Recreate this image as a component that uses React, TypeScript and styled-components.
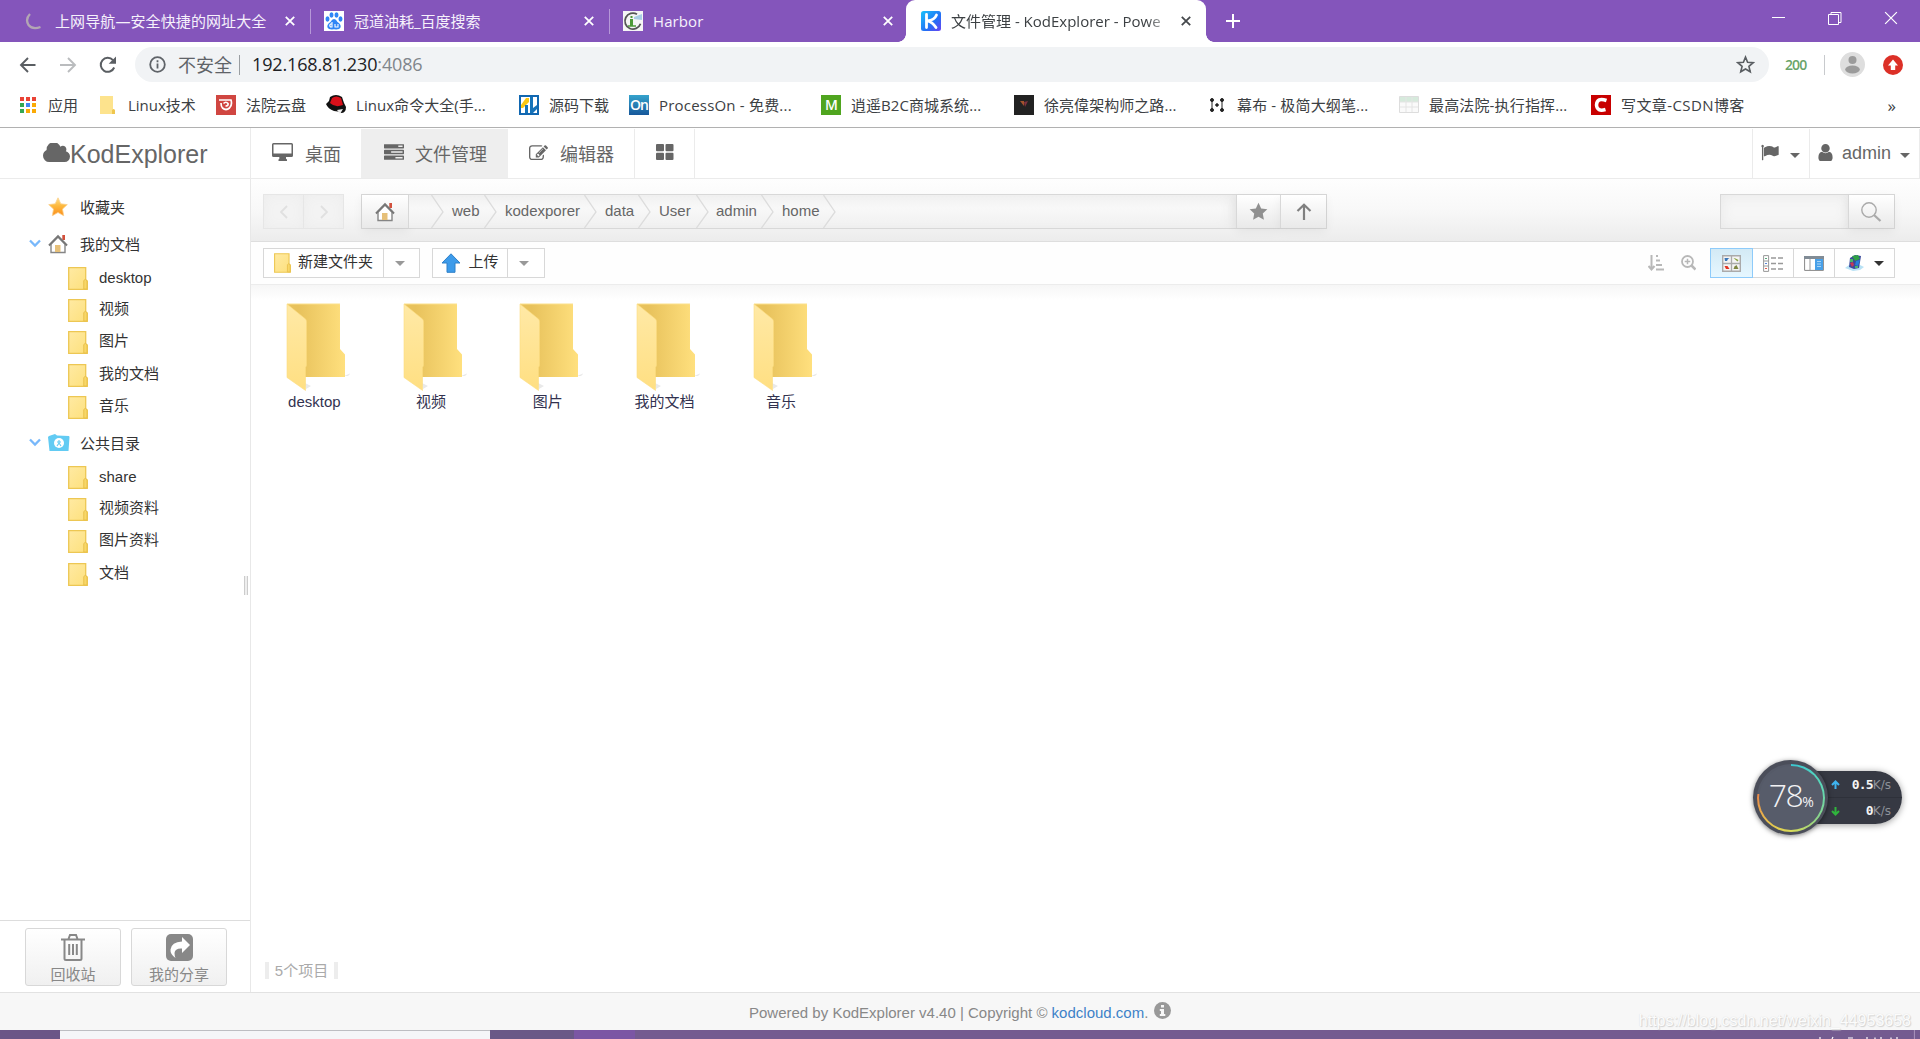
import React from "react";
import styled, { createGlobalStyle } from "styled-components";

const Global = createGlobalStyle`
  * { box-sizing: border-box; }
  html, body { margin: 0; padding: 0; overflow: hidden; background: #fff; }
  svg { display: block; flex: none; }
`;

const uiFont = `"Open Sans", "Noto Sans CJK SC", sans-serif`;
const appFont = `"Liberation Sans", "Noto Sans CJK SC", sans-serif`;

const Screen = styled.div`
  position: relative;
  width: 1920px;
  height: 1039px;
  overflow: hidden;
  display: flex;
  flex-direction: column;
  background: #fff;
  font-family: ${appFont};
  white-space: nowrap;
`;

/* ---------- browser chrome ---------- */
const TabStrip = styled.div`
  height: 42px;
  flex: none;
  display: flex;
  background: #8455bb;
  color: #f3eef8;
  font-family: ${uiFont};
`;
const Tab = styled.div<{ $w: number; $pad: number; $active?: boolean; $line?: boolean }>`
  position: relative;
  width: ${p => p.$w}px;
  padding-left: ${p => p.$pad}px;
  display: flex;
  align-items: center;
  background: ${p => (p.$active ? "#fff" : "transparent")};
  color: ${p => (p.$active ? "#3c4043" : "#f6f1fb")};
  border-radius: ${p => (p.$active ? "9px 9px 0 0" : "0")};
  &::after {
    content: "";
    display: ${p => (p.$line ? "block" : "none")};
    position: absolute;
    right: 0;
    top: 9px;
    width: 1px;
    height: 25px;
    background: #b698d8;
  }
`;
const TabFoot = styled.i<{ $side: "left" | "right" }>`
  position: absolute;
  bottom: 0;
  ${p => p.$side}: -8px;
  width: 8px;
  height: 8px;
  background: radial-gradient(circle at ${p => (p.$side === "left" ? "0 0" : "8px 0")}, transparent 7.5px, #fff 8px);
`;
const TabTitle = styled.span<{ $w: number; $ls?: number; $fade?: boolean }>`
  width: ${p => p.$w}px;
  margin-left: 10px;
  font-size: 15px;
  line-height: 24px;
  letter-spacing: ${p => p.$ls || 0}px;
  ${p => p.$fade && "mask-image: linear-gradient(90deg, #000 90%, rgba(0,0,0,.25));"}
`;
const TabClose = styled.span<{ $r?: number }>`
  position: absolute;
  right: ${p => p.$r ?? 16}px;
  top: 16px;
`;
const NewTab = styled.div`
  width: 54px;
  display: flex;
  align-items: center;
  justify-content: center;
`;
const WindowButtons = styled.div`
  margin-left: auto;
  padding: 11px 22px 0 0;
  display: flex;
  gap: 42px;
`;

const AddressRow = styled.div`
  height: 45px;
  flex: none;
  display: flex;
  align-items: center;
  padding-left: 18px;
  font-family: ${uiFont};
`;
const NavButtons = styled.div`
  width: 117px;
  display: flex;
  gap: 20px;
`;
const Omnibox = styled.div`
  width: 1634px;
  height: 35px;
  border-radius: 18px;
  background: #f1f3f5;
  display: flex;
  align-items: center;
  padding: 0 14px;
  font-size: 18px;
  color: #202124;
`;
const Insecure = styled.span`
  width: 61px;
  margin-left: 12px;
  color: #5f6368;
  line-height: 24px;
`;
const VLine = styled.i<{ $h: number; $c?: string }>`
  width: 1px;
  height: ${p => p.$h}px;
  background: ${p => p.$c || "#9a9ea2"};
`;
const Host = styled.span`
  width: 1484px;
  margin-left: 12px;
  padding-bottom: 2px;
  letter-spacing: -0.15px;
  span { color: #80868b; }
`;
const ChromeRight = styled.div`
  display: flex;
  align-items: center;
  padding-left: 16px;
  color: #6aa469;
  font-size: 14px;
  font-weight: 600;
`;
const Count = styled.span`width: 39px; letter-spacing: -0.9px;`;
const Avatar = styled.span`margin: 0 18px 0 15px;`;

const Bookmarks = styled.div`
  height: 41px;
  flex: none;
  display: flex;
  align-items: center;
  position: relative;
  padding: 0 0 4px 18px;
  border-bottom: 1px solid #b1b1b1;
  font-family: ${uiFont};
  font-size: 15px;
  color: #3c4043;
`;
const Bookmark = styled.div<{ $w: number; $ls?: number }>`
  width: ${p => p.$w}px;
  display: flex;
  align-items: center;
  gap: 10px;
  line-height: 24px;
  letter-spacing: ${p => p.$ls || 0}px;
`;
const SiteTile = styled.i<{ $bg: string }>`
  width: 20px;
  height: 20px;
  flex: none;
  display: flex;
  align-items: center;
  justify-content: center;
  background: ${p => p.$bg};
  color: #fff;
  font: 600 14px/20px "Open Sans", sans-serif;
  letter-spacing: -0.9px;
`;

/* ---------- application header ---------- */
const Header = styled.div`
  height: 51px;
  flex: none;
  display: flex;
  border-bottom: 1px solid #ebebeb;
  color: #666;
`;
const Brand = styled.div`
  width: 251px;
  display: flex;
  align-items: center;
  padding: 2px 0 0 43px;
  border-right: 1px solid #ebebeb;
  font-size: 25px;
  svg { margin-bottom: 3px; }
`;
const MenuItem = styled.div<{ $w: number; $active?: boolean; $pad: number; $line?: boolean; $gap?: number; $left?: boolean }>`
  width: ${p => p.$w}px;
  margin-left: ${p => (p.$left ? "auto" : "0")};
  margin-top: 1px;
  padding: 0 0 1px ${p => p.$pad}px;
  display: flex;
  align-items: center;
  gap: ${p => p.$gap ?? 12}px;
  background: ${p => (p.$active ? "#eee" : "transparent")};
  border-left: ${p => (p.$left ? "1px solid #ebebeb" : "0")};
  border-right: ${p => (p.$line ? "1px solid #ebebeb" : "0")};
  font-size: 18px;
  svg { margin-bottom: 2px; }
`;
const UserItem = styled(MenuItem)`
  border-left: 1px solid #ebebeb;
`;
const Caret = styled.i<{ $c?: string; $drop?: number; $back?: number }>`
  width: 0;
  height: 0;
  margin-top: ${p => p.$drop || 0}px;
  margin-right: ${p => p.$back || 0}px;
  border: 5px solid transparent;
  border-top-color: ${p => p.$c || "#666"};
  border-bottom: 0;
`;

/* ---------- body ---------- */
const Body = styled.div`
  flex: none;
  height: 813px;
  display: flex;
`;
const Sidebar = styled.div`
  width: 251px;
  display: flex;
  flex-direction: column;
  border-right: 1px solid #e8e8e8;
  font-size: 15px;
  color: #333;
`;
const Tree = styled.div`
  position: relative;
  height: 741px;
  padding-top: 9px;
`;
const Branch = styled.div`
  height: 37px;
  display: flex;
  align-items: center;
  padding-left: 29px;
`;
const Arrow = styled.span`width: 19px;`;
const BranchIcon = styled.span`width: 32px;`;
const Leaf = styled.div`
  height: 32.4px;
  padding-left: 68px;
  display: flex;
  align-items: center;
  gap: 11px;
`;
const LeafName = styled.span<{ $cjk: boolean }>`
  line-height: 22px;
  padding-bottom: ${p => (p.$cjk ? 3 : 1)}px;
`;
const Splitter = styled.i`
  position: absolute;
  left: 244px;
  top: 397px;
  width: 4px;
  height: 19px;
  border: solid #ccc;
  border-width: 0 1px;
  background: #eee;
`;
const SideFoot = styled.div`
  flex: 1;
  display: flex;
  gap: 10px;
  padding: 7px 0 0 25px;
  border-top: 1px solid #ddd;
`;
const FootButton = styled.div`
  width: 96px;
  height: 58px;
  display: flex;
  flex-direction: column;
  align-items: center;
  padding-top: 5px;
  gap: 3px;
  border: 1px solid #d8d8d8;
  border-radius: 3px;
  background: linear-gradient(#fff, #f0f0f0);
  color: #888;
  line-height: 22px;
`;

const Main = styled.div`
  flex: 1;
  display: flex;
  flex-direction: column;
`;
const PathBar = styled.div`
  height: 63px;
  display: flex;
  align-items: flex-start;
  padding: 15px 25px 0 12px;
  background: linear-gradient(#fefefe, #f8f8f8 50%, #ececec);
  border-bottom: 1px solid #dedede;
`;
const Group = styled.div<{ $mute?: boolean; $w?: number; $end?: boolean }>`
  display: flex;
  height: 35px;
  width: ${p => (p.$w ? p.$w + "px" : "auto")};
  margin-right: ${p => (p.$mute ? 17 : 0)}px;
  margin-left: ${p => (p.$end ? "auto" : "0")};
  border: 1px solid ${p => (p.$mute ? "#e6e6e6" : "#d8d8d8")};
`;
const GradButton = styled.div<{ $w: number; $mute?: boolean; $line?: "left" | "right" }>`
  width: ${p => p.$w}px;
  display: flex;
  align-items: center;
  justify-content: center;
  background: ${p => (p.$mute ? "#f3f3f3" : "linear-gradient(#fff, #e9e9e9)")};
  box-shadow: ${p => (p.$mute ? "inset 0 0 12px #ececec" : "0 3px 10px rgba(0,0,0,.06)")};
  ${p => p.$line && `border-${p.$line}: 1px solid ${p.$mute ? "#e6e6e6" : "#d8d8d8"};`}
`;
const Crumbs = styled.div`
  flex: 1;
  display: flex;
  background: linear-gradient(#f1f1f1, #f8f8f8 40%, #f0f0f0);
  box-shadow: inset -10px 0 14px -6px #e9e9e9;
  font-size: 15px;
  line-height: 32px;
  color: #666;
`;
const Crumb = styled.div<{ $w: number; $pad: number }>`
  width: ${p => p.$w}px;
  display: flex;
  justify-content: space-between;
  padding-left: ${p => p.$pad}px;
  margin-right: -13px;
`;
const SearchBox = styled.div`
  width: 127px;
  background: #f6f6f6;
  box-shadow: inset 0 0 14px #e8e8e8;
`;
const Toolbar = styled.div`
  height: 43px;
  display: flex;
  align-items: center;
  padding: 0 25px 0 12px;
  border-bottom: 1px solid #ececec;
  background: #fefefe;
`;
const ToolGroup = styled.div<{ $mr?: number }>`
  height: 30px;
  display: flex;
  margin-right: ${p => p.$mr || 0}px;
  border: 1px solid #d8d8d8;
  background: #fff;
  font-size: 15px;
  color: #333;
`;
const ToolButton = styled.div<{ $w: number; $line?: boolean; $on?: boolean; $gap?: number }>`
  width: ${p => p.$w}px;
  display: flex;
  align-items: center;
  justify-content: center;
  gap: ${p => p.$gap || 7}px;
  line-height: 22px;
  border-right: ${p => (p.$line ? "1px solid #d8d8d8" : "0")};
  ${p => p.$on && "margin: -1px 0 -1px -1px; border: 1px solid #8ecbfa; background: linear-gradient(#d3eaf5, #e6f7ff);"}
`;
const ToolLabel = styled.span`padding-bottom: 2px;`;
const ToolRight = styled.div`
  margin-left: auto;
  display: flex;
  align-items: center;
`;
const LooseIcons = styled.div`
  display: flex;
  gap: 17px;
  margin-right: 14px;
`;
const Files = styled.div`
  flex: 1;
  display: flex;
  align-items: flex-start;
  padding: 18px 0 0 5px;
  background: linear-gradient(#f6f6f6, #fff 15px);
`;
const FileItem = styled.div`
  width: 116.7px;
  display: flex;
  flex-direction: column;
  align-items: center;
  font-size: 15px;
  line-height: 20px;
  color: #32324f;
  svg { margin: 0 0 -1px 1px; }
`;
const Status = styled.div`
  width: 73px;
  height: 17px;
  margin: 0 0 13px 14px;
  border: solid #ededed;
  border-width: 0 4px;
  text-align: center;
  font-size: 15px;
  line-height: 17px;
  color: #aaa;
`;
const Footer = styled.div`
  height: 38px;
  flex: none;
  display: flex;
  align-items: center;
  padding: 1px 0 0 749px;
  border-top: 1px solid #e2e2e2;
  background: #f7f7f7;
  font-size: 15px;
  color: #888;
  a { color: #3d82c8; }
  svg { margin: 0 0 3px 6px; }
`;
const Taskbar = styled.div`
  height: 9px;
  flex: none;
  display: flex;
  background: #745b90;
`;
const TaskPart = styled.i<{ $w: number; $bg: string; $top?: string }>`
  width: ${p => p.$w}px;
  background: ${p => p.$bg};
  border-top: 1px solid ${p => p.$top || p.$bg};
`;
const Tray = styled.span`
  margin-left: auto;
  padding-right: 5px;
`;

/* ---------- floating layers ---------- */
const Watermark = styled.div`
  position: absolute;
  right: 9px;
  bottom: 8px;
  color: #fcfcfc;
  font-size: 16px;
  line-height: 20px;
  text-shadow: 1px 1px 1px #d2d2d2, 0 0 1px #d6d6d6;
`;
const SpeedWidget = styled.div`
  position: absolute;
  left: 1753px;
  top: 760px;
  width: 150px;
  height: 76px;
`;
const SpeedPill = styled.div`
  position: absolute;
  left: 38px;
  top: 11px;
  width: 111px;
  height: 53px;
  border-radius: 0 27px 27px 0;
  background: linear-gradient(#363943 0 49%, #2e313a 49% 51%, #363943 51%);
  box-shadow: 0 1px 7px rgba(0, 0, 0, 0.4);
  display: flex;
  flex-direction: column;
`;
const SpeedLine = styled.div`
  height: 26.5px;
  display: flex;
  align-items: center;
  justify-content: space-between;
  padding: 1px 11px 0 40px;
  color: #f4f4f4;
  font: 600 13px/20px "DejaVu Sans Mono", monospace;
  letter-spacing: -0.8px;
  small { color: #8f929a; font: 12px "DejaVu Sans", sans-serif; letter-spacing: 0; }
`;
const Dial = styled.div`
  position: absolute;
  left: 0;
  top: 0;
  width: 75px;
  height: 75px;
  padding: 3.5px;
  border-radius: 50%;
  background: #4b4e5a;
  box-shadow: 0 1px 5px rgba(0, 0, 0, 0.5);
`;
const Ring = styled.div`
  width: 68px;
  height: 68px;
  border-radius: 50%;
  padding: 2px;
  background: conic-gradient(#3ac7d2, #5ed8b5 20%, #8bd48a 35%, #d9dc58 50%, #e8c14c 62%, #e8874a 77%, #555a68 77% 100%);
`;
const DialFace = styled.div`
  width: 64px;
  height: 64px;
  border-radius: 50%;
  background: #575c6a;
  color: #f2f2f4;
  display: flex;
  align-items: baseline;
  justify-content: center;
  padding-top: 9px;
  font: 300 32px/40px "Open Sans", sans-serif;
  letter-spacing: -1.5px;
  small { font-size: 14px; font-weight: 400; }
`;

/* ---------- drawings ---------- */
const Glyph = ({ d, box, w, h, c = "currentColor" }: { d: string; box: string; w: number; h: number; c?: string }) => (
  <svg width={w} height={h} viewBox={box} fill={c}><path d={d} /></svg>
);
const paths = {
  cloud: "M1984 1152q0 159-112.5 271.5t-271.5 112.5h-1088q-185 0-316.5-131.5t-131.5-316.5q0-132 71-241.5t187-163.5q-2-28-2-43 0-212 150-362t362-150q158 0 286.5 88t187.5 230q70-62 166-62 106 0 181 75t75 181q0 75-41 138 129 30 213 134.5t84 239.5z",
  flag: "M320 256q0 72-64 110v1266q0 13-9.5 22.5t-22.5 9.5h-64q-13 0-22.5-9.5t-9.5-22.5v-1266q-64-38-64-110 0-53 37.5-90.5t90.5-37.5 90.5 37.5 37.5 90.5zm1472 64v763q0 25-12.5 38.5t-39.5 27.5q-215 116-369 116-61 0-123.5-22t-108.5-48-115.5-48-142.5-22q-192 0-464 146-17 9-33 9-26 0-45-19t-19-45v-742q0-32 31-55 21-14 79-43 236-120 421-120 107 0 200 29t219 88q38 19 88 19 54 0 117.5-21t110-47 88-47 54.5-21q26 0 45 19t19 45z",
  user: "M1536 1399q0 109-62.5 187t-150.5 78h-854q-88 0-150.5-78t-62.5-187q0-85 8.5-160.5t31.5-152 58.5-131 94-89 134.5-34.5q131 128 313 128t313-128q76 0 134.5 34.5t94 89 58.5 131 31.5 152 8.5 160.5zm-256-887q0 159-112.5 271.5t-271.5 112.5-271.5-112.5-112.5-271.5 112.5-271.5 271.5-112.5 271.5 112.5 112.5 271.5z",
  edit: "M888 1184l116-116-152-152-116 116v56h96v96h56zm440-720q-16-16-33 1l-350 350q-17 17-1 33t33-1l350-350q17-17 1-33zm80 594v190q0 119-84.5 203.5t-203.5 84.5h-832q-119 0-203.5-84.5t-84.5-203.5v-832q0-119 84.5-203.5t203.5-84.5h832q63 0 117 25 15 7 18 23 3 17-9 29l-49 49q-14 14-32 8-23-6-45-6h-832q-66 0-113 47t-47 113v832q0 66 47 113t113 47h832q66 0 113-47t47-113v-126q0-13 9-22l64-64q15-15 35-7t20 29zm-96-738l288 288-672 672h-288v-288zm444 132l-92 92-288-288 92-92q28-28 68-28t68 28l152 152q28 28 28 68t-28 68z",
  tasks: "M1024 1408h640v-128h-640v128zm-384-512h1024v-128h-1024v128zm640-512h384v-128h-384v128zm512 832v256q0 26-19 45t-45 19h-1664q-26 0-45-19t-19-45v-256q0-26 19-45t45-19h1664q26 0 45 19t19 45zm0-512v256q0 26-19 45t-45 19h-1664q-26 0-45-19t-19-45v-256q0-26 19-45t45-19h1664q26 0 45 19t19 45zm0-512v256q0 26-19 45t-45 19h-1664q-26 0-45-19t-19-45v-256q0-26 19-45t45-19h1664q26 0 45 19t19 45z",
};
const Cross = ({ s = 10, c = "#fff", w = 1.8 }) => (
  <svg width={s} height={s} viewBox="0 0 10 10" stroke={c} strokeWidth={w}><path d="M.8.8l8.4 8.4M9.2.8L.8 9.2" /></svg>
);
const SmallFolder = ({ w = 20, h = 23 }) => (
  <svg width={w} height={h} viewBox="0 0 20 23">
    <defs><linearGradient id="sf" x2="1" y2="1"><stop stopColor="#ffeaa3" /><stop offset="1" stopColor="#fde07c" /></linearGradient></defs>
    <path d="M.7.7h17v12l1.6 1.3v8.3H.7z" fill="url(#sf)" stroke="#edc753" strokeWidth="1.3" />
    <path d="M15.8 22v-8.500l1.700-1.300 1.500 1.800v8z" fill="#f8d768" stroke="#e9c04b" />
  </svg>
);
const House = ({ s = 20 }) => (
  <svg width={s} height={s} viewBox="0 0 20 20">
    <path d="M14.300 1h2.700v5h-2.700z" fill="#d2503c" />
    <path d="M3 10v8.500h14V10l-7-7z" fill="#fff" stroke="#858585" strokeWidth="1.400" />
    <path d="M1 11.500l9-9.300 9 9.300" fill="none" stroke="#777" strokeWidth="2" />
    <path d="M7 11h5.500v7H7z" fill="#e6c07a" />
  </svg>
);
const Star = ({ s = 20, fill = "#909090" }) => (
  <svg width={s} height={s} viewBox="0 0 20 20"><path d="M10 .8l2.800 6 6.500.8-4.800 4.500 1.200 6.600L10 15.500l-5.700 3.200 1.200-6.600L.7 7.600l6.500-.8z" fill={fill} /></svg>
);
const GoldStar = () => (
  <svg width="20" height="20" viewBox="0 0 20 20">
    <defs><linearGradient id="gs" x2="0" y2="1"><stop stopColor="#ffe08a" /><stop offset=".45" stopColor="#fdb93e" /><stop offset="1" stopColor="#fb8d1c" /></linearGradient></defs>
    <path d="M10 .8l2.800 6 6.500.8-4.800 4.500 1.200 6.600L10 15.500l-5.700 3.200 1.200-6.600L.7 7.600l6.500-.8z" fill="url(#gs)" stroke="#fbd08c" strokeWidth=".8" />
  </svg>
);
const BigFolder = () => (
  <svg width="70" height="90" viewBox="0 0 70 90">
    <defs>
      <linearGradient id="fb" x2="1"><stop offset=".2" stopColor="#e8c25c" /><stop offset="1" stopColor="#ffe07e" /></linearGradient>
      <linearGradient id="ff" x2="0" y2="1"><stop stopColor="#ffe9a6" /><stop offset="1" stopColor="#ffdf82" /></linearGradient>
    </defs>
    <path d="M26 86l-1-6 6 3zM64 73l7-3-3 3z" fill="#e9e9e9" />
    <path d="M7 1h52.500q.5 0 .5.500v44.500l5 5.500v22.500H22z" fill="url(#fb)" />
    <path d="M7 1h53" stroke="#fbe08c" />
    <path d="M7 1l18.500 15q1 1 1 2.500v44l-1 2V87.500L7 74.500z" fill="url(#ff)" stroke="#fbdc80" strokeWidth=".6" />
  </svg>
);
const Chevron = () => (
  <svg width="13" height="33" viewBox="0 0 13 33" fill="none" stroke="#dcdcdc" strokeWidth="1.300"><path d="M.5 0L12 17 .5 33" /></svg>
);
const TreeArrow = () => (
  <svg width="12" height="9" viewBox="0 0 12 9" fill="none" stroke="#78b8fb" strokeWidth="2.300"><path d="M1 1.500l5 5 5-5" /></svg>
);

const bookmarks: { w: number; ls?: number; text: string; icon: React.ReactNode }[] = [
  { w: 80, text: "应用", icon: <svg width="20" height="20" viewBox="0 0 20 20">{["#ea4335", "#ea4335", "#ea4335", "#34a853", "#4285f4", "#fbaa05", "#34a853", "#fbaa05", "#fbaa05"].map((c, i) => <rect key={i} x={2 + (i % 3) * 6} y={2 + Math.floor(i / 3) * 6} width="4" height="4" fill={c} />)}</svg> },
  { w: 118, text: "Linux技术", icon: <svg width="20" height="20" viewBox="0 0 20 20"><path d="M2 1h13v13l2 1v4H2z" fill="#fde38d" /><path d="M14 19v-4l1.500-1 1.500 1v4z" fill="#efc64e" /></svg> },
  { w: 110, text: "法院云盘", icon: <SiteTile $bg="#d04641"><svg width="14" height="14" viewBox="0 0 14 14" fill="none" stroke="#fff" strokeWidth="1.700"><path d="M0 2h12q1.500 5-1.500 8-3.500 3-7 0Q2 8.500 2 5M4.500 5.500q2.500-2.500 4.500 0 .5 2.500-2.500 2.500" /></svg></SiteTile> },
  { w: 193, ls: 0.05, text: "Linux命令大全(手...", icon: <svg width="20" height="20" viewBox="0 0 20 20"><path d="M0 9l3-3 1-4q6-4 12 0l2 6 2 4q0 6-5 6-3-2-7-2-6-2-8-7z" fill="#111" /><path d="M4 8l2-5q4-3 9 0l2 7q-8 3-13-2z" fill="#d8101a" /><path d="M11 15l6-1-3 5z" fill="#eee" /></svg> },
  { w: 110, text: "源码下载", icon: <svg width="20" height="20" viewBox="0 0 20 20"><path d="M1 1h18v18H1z" fill="#fff" stroke="#1167b1" strokeWidth="2" /><path d="M2 10l5-7h3v4L4 13H2z" fill="#fbc711" /><path d="M6 10h3v8H6zM11 2h3v11l4-3v4l-4 4h-3z" fill="#1673b9" /></svg> },
  { w: 192, ls: 0.2, text: "ProcessOn - 免费...", icon: <SiteTile $bg="linear-gradient(#35a3cc,#17589b)">On</SiteTile> },
  { w: 193, ls: 0.05, text: "逍遥B2C商城系统...", icon: <SiteTile $bg="#4fa51f">M</SiteTile> },
  { w: 193, ls: 0.05, text: "徐亮偉架构师之路...", icon: <SiteTile $bg="#222"><svg width="8" height="8" viewBox="0 0 8 8"><path d="M0 0h4v5z" fill="#a2532d" /><path d="M4 1l4-1-3 6z" fill="#80313e" /></svg></SiteTile> },
  { w: 192, ls: 0.15, text: "幕布 - 极简大纲笔...", icon: <svg width="20" height="20" viewBox="0 0 20 20" fill="#222" stroke="#222"><path d="M5 5v11M15 5v11" /><circle cx="5" cy="5" r="1.500" /><circle cx="15" cy="5" r="1.500" /><circle cx="5" cy="15" r="1.500" /><circle cx="15" cy="15" r="1.500" /><circle cx="10" cy="10" r="1.300" /></svg> },
  { w: 192, ls: 0.15, text: "最高法院-执行指挥...", icon: <svg width="20" height="18" viewBox="0 0 20 18"><path d="M.5.5h19v16H.5z" fill="#fafafa" stroke="#ddd" /><path d="M1 1h18v5H1z" fill="#d6eadc" /><path d="M1 6h18M1 11h18M7 1v15M13 1v15" stroke="#e4e4e4" /></svg> },
  { w: 160, ls: 0.4, text: "写文章-CSDN博客", icon: <SiteTile $bg="#c80000"><svg width="14" height="16" viewBox="0 0 14 16" fill="none" stroke="#fff" strokeWidth="3.500"><path d="M12.500 3.500Q3 0 2.500 8q.5 7 9 4.500" /></svg></SiteTile> },
];
const Overflow = styled.span`margin-left: auto; margin-right: 24px; font-size: 17px;`;

const crumbs: [string, number, number][] = [["", 35, 0], ["web", 66, 21], ["kodexporer", 113, 21], ["data", 67, 21], ["User", 71, 21], ["admin", 78, 20], ["home", 75, 21]];
const docs = ["desktop", "视频", "图片", "我的文档", "音乐"];
const shared = ["share", "视频资料", "图片资料", "文档"];

const TreeLeaf = ({ name }: { name: string }) => (
  <Leaf><SmallFolder /><LeafName $cjk={!/^[a-z]/.test(name)}>{name}</LeafName></Leaf>
);

export default function App() {
  return (
    <Screen>
      <Global />
      <TabStrip>
        <Tab $w={311} $pad={25} $line>
          <svg width="20" height="20" viewBox="0 0 20 20" fill="none" stroke="#b3a6b4" strokeWidth="2.300"><path d="M5 3Q0 8 3.500 14q4 5 12 2" /></svg>
          <TabTitle $w={215} $ls={0.1}>上网导航—安全快捷的网址大全</TabTitle>
          <TabClose><Cross /></TabClose>
        </Tab>
        <Tab $w={299} $pad={13} $line>
          <svg width="20" height="20" viewBox="0 0 20 20"><path d="M0 0h20v20H0z" fill="#fff" /><g fill="#2f86f6"><ellipse cx="3.500" cy="8" rx="2" ry="2.700" /><ellipse cx="7.500" cy="4" rx="2" ry="2.700" /><ellipse cx="12.500" cy="4" rx="2" ry="2.700" /><ellipse cx="16.500" cy="8" rx="2" ry="2.700" /><path d="M10 8q2 0 3.500 3 4 2.500 3 5.500-1 2.500-6.500 1.800-5.500.7-6.500-1.800-1-3 3-5.500Q8 8 10 8z" /></g><path d="M8 11v5H6.500q-1.500-1.500 0-3H8M11 13v3h3v-3" fill="none" stroke="#fff" strokeWidth="1.100" /></svg>
          <TabTitle $w={200}>冠道油耗_百度搜索</TabTitle>
          <TabClose><Cross /></TabClose>
        </Tab>
        <Tab $w={296} $pad={13}>
          <svg width="20" height="20" viewBox="0 0 20 20"><path d="M0 0h20v20H0z" fill="#f5f5f5" /><path d="M14 3.200a8 8 0 1 0 3.500 9.500" fill="none" stroke="#555" strokeWidth="1.800" /><path d="M7 8h3v7H7zM7.500 5h2v2h-2z" fill="#4d9a38" /><path d="M11 6l8-3v6l-8-1z" fill="#a9cee5" /><path d="M5 15h8" stroke="#4d9a38" strokeWidth="1.500" /></svg>
          <TabTitle $w={200} $ls={0.1}>Harbor</TabTitle>
          <TabClose $r={13}><Cross /></TabClose>
        </Tab>
        <Tab $w={300} $pad={15} $active>
          <TabFoot $side="left" />
          <svg width="20" height="20" viewBox="0 0 20 20"><defs><linearGradient id="kg" x2="1" y2="1"><stop stopColor="#19c3fb" /><stop offset=".6" stopColor="#2470f5" /><stop offset="1" stopColor="#6b42f0" /></linearGradient></defs><rect width="20" height="20" rx="2.500" fill="url(#kg)" /><path d="M5.500 3.500v13M15.500 4q-2 5-9 6 5 1 8.500 6.500" fill="none" stroke="#fff" strokeWidth="2.800" strokeLinecap="round" /></svg>
          <TabTitle $w={217} $fade>文件管理 - KodExplorer - Powe</TabTitle>
          <TabClose $r={15}><Cross c="#45484c" /></TabClose>
          <TabFoot $side="right" />
        </Tab>
        <NewTab><svg width="16" height="16" viewBox="0 0 16 16" stroke="#fff" strokeWidth="2"><path d="M8 1v14M1 8h14" /></svg></NewTab>
        <WindowButtons>
          <svg width="14" height="14" viewBox="0 0 14 14" stroke="#fff"><path d="M0 6.500h13" /></svg>
          <svg width="14" height="15" viewBox="0 0 14 15" stroke="#fff" fill="none"><path d="M.5 3.500h10v10H.5zM3 3.500V1.500h10v10h-2" /></svg>
          <Cross s={14} w={0.9} />
        </WindowButtons>
      </TabStrip>

      <AddressRow>
        <NavButtons>
          <svg width="20" height="20" viewBox="0 0 20 20" fill="none" stroke="#5a5e62" strokeWidth="1.900"><path d="M17.500 10H3M10 3L3 10l7 7" /></svg>
          <svg width="20" height="20" viewBox="0 0 20 20" fill="none" stroke="#babcbe" strokeWidth="1.900"><path d="M2 10h15M10 3l7 7-7 7" /></svg>
          <svg width="20" height="20" viewBox="0 0 20 20" fill="none" stroke="#5a5e62" strokeWidth="2"><path d="M16.200 12.500A7 7 0 1 1 15 5.200" /><path d="M18 1.500v7.300h-7.300z" fill="#5a5e62" stroke="none" /></svg>
        </NavButtons>
        <Omnibox>
          <svg width="17" height="17" viewBox="0 0 17 17" fill="none" stroke="#5f6368" strokeWidth="1.800"><circle cx="8.500" cy="8.500" r="7.300" /><path d="M8.500 7.500v5M8.500 4.300v1.900" /></svg>
          <Insecure>不安全</Insecure>
          <VLine $h={20} />
          <Host>192.168.81.230<span>:4086</span></Host>
          <svg width="19" height="19" viewBox="0 0 20 20" fill="none" stroke="#5a5e62" strokeWidth="1.700"><path d="M10 2.200l2.200 5.400 5.900.5-4.500 3.900 1.400 5.700-5-3-5 3 1.400-5.700L1.900 8.100l5.900-.5z" /></svg>
        </Omnibox>
        <ChromeRight>
          <Count>200</Count>
          <VLine $h={20} $c="#c8cacd" />
          <Avatar><svg width="25" height="25" viewBox="0 0 25 25"><circle cx="12.500" cy="12.500" r="12.500" fill="#dedede" /><circle cx="12.500" cy="8" r="4" fill="#9b9b9b" /><ellipse cx="12.500" cy="17.500" rx="7.300" ry="4" fill="#9b9b9b" /></svg></Avatar>
          <svg width="20" height="20" viewBox="0 0 20 20"><circle cx="10" cy="10" r="10" fill="#dc3027" /><path d="M10 4.500l5 6h-2.800V15H7.800v-4.500H5z" fill="#fff" /></svg>
        </ChromeRight>
      </AddressRow>

      <Bookmarks>
        {bookmarks.map(b => <Bookmark key={b.text} $w={b.w} $ls={b.ls}>{b.icon}{b.text}</Bookmark>)}
        <Overflow>»</Overflow>
      </Bookmarks>

      <Header>
        <Brand><Glyph d={paths.cloud} box="64 256 1920 1280" w={27} h={20} />KodExplorer</Brand>
        <MenuItem $w={110} $pad={21}>
          <svg width="21" height="18" viewBox="0 0 21 18" fill="currentColor"><path d="M1.500 0h18Q21 0 21 1.500v11q0 1.500-1.500 1.500H14q-.5 2 1 2.600V18H6.500v-1.400q1.300-.6.800-2.600H1.500Q0 14 0 12.500v-11Q0 0 1.500 0zm0 1.500v9h18v-9z" fillRule="evenodd" /></svg>
          桌面
        </MenuItem>
        <MenuItem $w={147} $pad={23} $active $gap={11}><Glyph d={paths.tasks} box="0 128 1792 1408" w={20} h={16} />文件管理</MenuItem>
        <MenuItem $w={127} $pad={21} $line $gap={12}><Glyph d={paths.edit} box="0 100 1792 1440" w={19} h={17} />编辑器</MenuItem>
        <MenuItem $w={60} $pad={21} $line><svg width="18" height="16" viewBox="0 0 18 16" fill="currentColor"><rect width="8" height="7.300" rx="1" /><rect x="9.500" width="8" height="7.300" rx="1" /><rect y="8.700" width="8" height="7.300" rx="1" /><rect x="9.500" y="8.700" width="8" height="7.300" rx="1" /></svg></MenuItem>
        <MenuItem $w={57} $pad={8} $left $gap={11}><Glyph d={paths.flag} box="32 128 1792 1536" w={18} h={17} /><Caret $drop={5} /></MenuItem>
        <UserItem $w={111} $pad={8} $gap={9} $line><Glyph d={paths.user} box="256 128 1280 1536" w={15} h={17} />admin<Caret $drop={5} /></UserItem>
      </Header>

      <Body>
        <Sidebar>
          <Tree>
            <Branch><Arrow /><BranchIcon><GoldStar /></BranchIcon>收藏夹</Branch>
            <Branch><Arrow><TreeArrow /></Arrow><BranchIcon><House /></BranchIcon>我的文档</Branch>
            {docs.map(n => <TreeLeaf key={n} name={n} />)}
            <Branch>
              <Arrow><TreeArrow /></Arrow>
              <BranchIcon><svg width="22" height="17" viewBox="0 0 22 17"><path d="M1 2l6-2 2 1.500 12 .5.500 1-1 14H1.500L0 3z" fill="#62cbf3" /><circle cx="11" cy="9" r="5" fill="#fff" /><path d="M11 6v3l-2 3M11 9l2 3M9 8h4" stroke="#62cbf3" strokeWidth="1.100" fill="none" /></svg></BranchIcon>
              公共目录
            </Branch>
            {shared.map(n => <TreeLeaf key={n} name={n} />)}
            <Splitter />
          </Tree>
          <SideFoot>
            <FootButton>
              <svg width="24" height="27" viewBox="0 0 24 27" fill="none" stroke="#888" strokeWidth="2"><path d="M0 5.500h24M3.500 6v18.500q0 1.500 1.500 1.500h14q1.500 0 1.500-1.500V6M7.500 5l1.500-4h6l1.500 4M8.200 10v11M12 10v11M15.800 10v11" /></svg>
              回收站
            </FootButton>
            <FootButton>
              <svg width="27" height="27" viewBox="0 0 27 27"><rect width="27" height="27" rx="5" fill="#888" /><path d="M16 3l8 8-8 8v-4.500q-7-.5-7.500 4.500 0 2.500 1 5Q4 20 4.500 15.500 5.500 8 16 7.500z" fill="#fff" /></svg>
              我的分享
            </FootButton>
          </SideFoot>
        </Sidebar>

        <Main>
          <PathBar>
            <Group $mute>
              <GradButton $w={40} $mute $line="right"><svg width="8" height="14" viewBox="0 0 8 14" fill="none" stroke="#e0e0e0" strokeWidth="1.800"><path d="M7 1L1 7l6 6" /></svg></GradButton>
              <GradButton $w={39} $mute><svg width="8" height="14" viewBox="0 0 8 14" fill="none" stroke="#e0e0e0" strokeWidth="1.800"><path d="M1 1l6 6-6 6" /></svg></GradButton>
            </Group>
            <Group $w={966}>
              <GradButton $w={47} $line="right"><House /></GradButton>
              <Crumbs>{crumbs.map(([t, w, p], i) => <Crumb key={i} $w={w} $pad={p}>{t}<i /><Chevron /></Crumb>)}</Crumbs>
              <GradButton $w={44} $line="left"><Star s={19} /></GradButton>
              <GradButton $w={46} $line="left"><svg width="16" height="17" viewBox="0 0 16 17" fill="none" stroke="#808080" strokeWidth="2.200"><path d="M8 17V2M1.500 8L8 1.700 14.500 8" /></svg></GradButton>
            </Group>
            <Group $end>
              <SearchBox />
              <GradButton $w={46} $line="left"><svg width="22" height="20" viewBox="0 0 22 20" fill="none" stroke="#aaa"><circle cx="8" cy="8" r="7.200" strokeWidth="1.400" /><path d="M13 13l6.500 6" strokeWidth="2.300" /></svg></GradButton>
            </Group>
          </PathBar>

          <Toolbar>
            <ToolGroup $mr={12}>
              <ToolButton $w={120} $line><SmallFolder w={17} h={20} /><ToolLabel>新建文件夹</ToolLabel></ToolButton>
              <ToolButton $w={35}><Caret $c="#999" $back={4} /></ToolButton>
            </ToolGroup>
            <ToolGroup>
              <ToolButton $w={75} $line><svg width="20" height="20" viewBox="0 0 20 20"><path d="M10 .8l9 9.200h-5v9.300H6V10H1z" fill="#3d9bea" stroke="#2f80c9" /></svg><ToolLabel>上传</ToolLabel></ToolButton>
              <ToolButton $w={36}><Caret $c="#999" $back={4} /></ToolButton>
            </ToolGroup>
            <ToolRight>
              <LooseIcons>
                <svg width="16" height="16" viewBox="0 0 16 16" fill="none" stroke="#b8b8b8" strokeWidth="2"><path d="M3.500 0v14M.5 11l3 3.500 3-3.500M8 1h2M8 5.500h4M8 10h6M8 14.500h8" /></svg>
                <svg width="15" height="16" viewBox="0 0 15 16" fill="none" stroke="#b8b8b8" strokeWidth="1.800"><circle cx="6.500" cy="6.500" r="5.500" /><path d="M6.500 3.700v5.600M3.700 6.500h5.600" strokeWidth="1.500" /><path d="M10.500 10.500l4 4" strokeWidth="2.500" /></svg>
              </LooseIcons>
              <ToolGroup>
                <ToolButton $w={43} $on>
                  <svg width="19" height="17" viewBox="0 0 19 17"><path d="M.7.7h17.600v15.600H.7z" fill="#f4f4f4" stroke="#aaa" strokeWidth="1.400" /><path d="M9.500 0v17M0 8.500h19" stroke="#aaa" strokeWidth="1.300" /><path d="M2.500 3h5L6 4 5 6H3z" fill="#3977b9" /><path d="M11.500 3l2 .5 3 1.500-1 1.500z" fill="#86a13b" /><path d="M2.500 11h3l2 3H4z" fill="#e23422" /><path d="M11.500 14l1-2.500 2-1.500 2 4z" fill="#7d8641" /></svg>
                </ToolButton>
                <ToolButton $w={41} $line>
                  <svg width="20" height="17" viewBox="0 0 20 17" stroke="#999"><path d="M.6.6h5v15.800h-5zM.6 6h5M.6 11h5" fill="#fff" /><path d="M8 3h5M15 3h5M8 8.500h5M15 8.500h5M8 14h5M15 14h5" strokeWidth="1.400" /><path d="M2 3.500h2" stroke="#5aa67b" /><path d="M2 8.500h2" stroke="#5a86d6" /><path d="M2 13.500h2" stroke="#e35c4e" /></svg>
                </ToolButton>
                <ToolButton $w={41} $line>
                  <svg width="20" height="15" viewBox="0 0 20 15"><path d="M.6.6h18.800v13.800H.6z" fill="#fff" stroke="#888" /><path d="M0 0h20v3H0z" fill="#818c96" /><path d="M6 3v11" stroke="#999" /><path d="M11 3h8v11h-8z" fill="#48a0e8" /><path d="M13 5.500h4M13 8h4M13 10.500h4" stroke="#a8d4f6" /></svg>
                </ToolButton>
                <ToolButton $w={59} $gap={10}>
                  <svg width="19" height="16" viewBox="0 0 19 16"><path d="M0 13l4-3h11l4 2-4 3-7 1z" fill="#b9e2f5" /><path d="M5 3l5-3 6 1-1 6-1 6-5 1-5-2z" fill="#3b4a9c" /><path d="M7 1l6-1 2 4-5 2z" fill="#2fa245" /><path d="M11 6l4-1-2 6-3-1z" fill="#287fd8" /><path d="M5 8l3-1 1 3-2 2z" fill="#c53a54" /><path d="M5 4h3v3H5zM10 11h3v2h-3z" fill="#48b56a" /></svg>
                  <Caret $c="#333" />
                </ToolButton>
              </ToolGroup>
            </ToolRight>
          </Toolbar>
          <Files>{docs.map(n => <FileItem key={n}><BigFolder />{n}</FileItem>)}</Files>
          <Status>5个项目</Status>
        </Main>
      </Body>

      <Footer>
        <span>Powered by KodExplorer v4.40 | Copyright © <a>kodcloud.com</a>.</span>
        <svg width="17" height="17" viewBox="0 0 17 17"><circle cx="8.500" cy="8.500" r="8.500" fill="#999" /><path d="M7 3h3v2.500H7zM5.800 7H10v5h1.300v2H5.800v-2H7V9H5.800z" fill="#f7f7f7" /></svg>
      </Footer>
      <Taskbar>
        <TaskPart $w={60} $bg="#6b5587" />
        <TaskPart $w={430} $bg="#f5f5f8" $top="#bdbdc2" />
        <TaskPart $w={84} $bg="#6a5887" />
        <TaskPart $w={61} $bg="#7b56a4" />
        <Tray><svg width="98" height="9" viewBox="0 0 98 9" fill="none" stroke="#fff" strokeWidth="1.200"><path d="M3 7v2M16 7l-1 2M31 8h5M50 7v2M58 9V7.500M64 7v2M74 9V7.500M80 7v2" /><path d="M97.500 0v9" stroke="#a48fb8" /></svg></Tray>
      </Taskbar>

      <Watermark>https://blog.csdn.net/weixin_44953658</Watermark>
      <SpeedWidget>
        <SpeedPill>
          <SpeedLine><svg width="9" height="9" viewBox="0 0 9 9" fill="none" stroke="#3fb4ef" strokeWidth="2"><path d="M4.500 9V1.500M1 5l3.500-3.500L8 5" /></svg><span>0.5<small>K/s</small></span></SpeedLine>
          <SpeedLine><svg width="9" height="9" viewBox="0 0 9 9" fill="none" stroke="#2fb53c" strokeWidth="2"><path d="M4.500 0v7.500M1 4l3.500 3.500L8 4" /></svg><span>0<small>K/s</small></span></SpeedLine>
        </SpeedPill>
        <Dial><Ring><DialFace>78<small>%</small></DialFace></Ring></Dial>
      </SpeedWidget>
    </Screen>
  );
}
